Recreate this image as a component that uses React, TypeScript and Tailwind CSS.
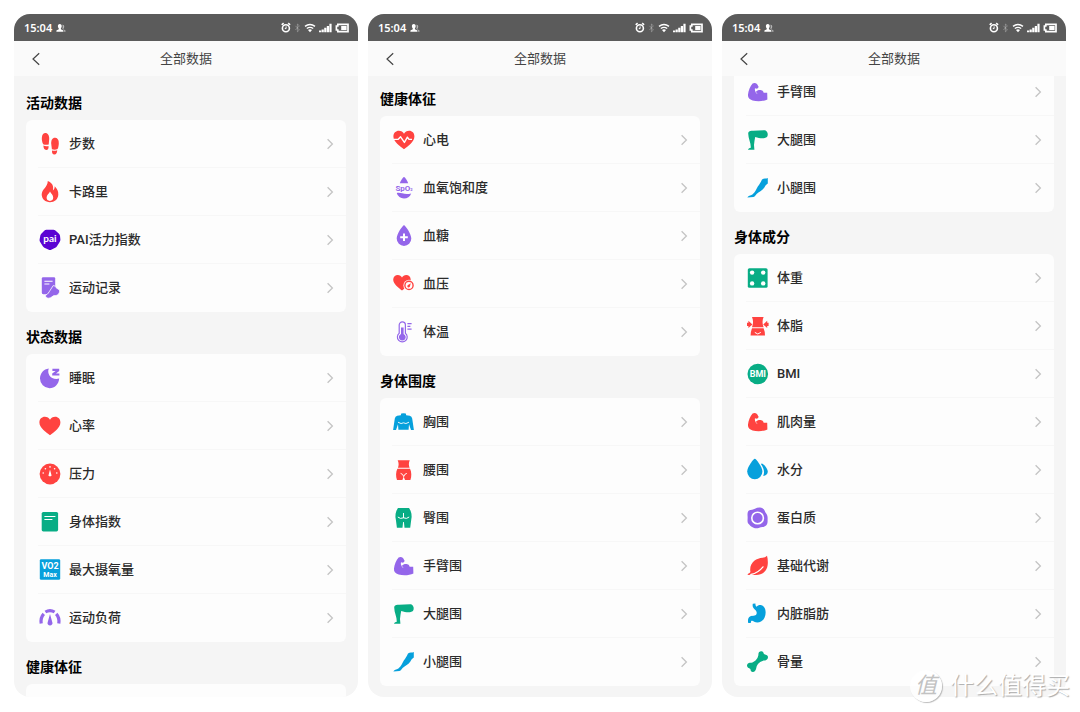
import type { ReactNode } from "react";

const RED = "#ff4340";
const PURPLE = "#9466ea";
const GREEN = "#08ad85";
const BLUE = "#06a0dc";

type Item = { label: string; icon: ReactNode };
type Group = { title?: string; items: Item[] };

function Icon({ color, children }: { color: string; children: ReactNode }) {
    return (
        <svg viewBox="0 0 22 22" fill={color} className="size-[22px] shrink-0 overflow-visible" aria-hidden="true">
            {children}
        </svg>
    );
}

const HEART = "M11 20.2 C7 17.2 .4 12.5 .4 7.4 C.4 4 2.9 1.8 5.8 1.8 C8.2 1.8 10 3 11 4.8 C12 3 13.8 1.8 16.2 1.8 C19.1 1.8 21.4 4 21.4 7.4 C21.4 12.5 15 17.2 11 20.2Z";
const DROP = "M11 0.2 C12.2 .2 18.3 8.6 18.3 13.6 A7.3 7.3 0 0 1 3.7 13.6 C3.7 8.6 9.8 .2 11 .2Z";

function Steps() {
    return (
        <Icon color={RED}>
            <path d="M6 0 C8.8 -.2 10.3 2.5 10.2 6 L9.7 11.4 C7.8 12.1 5.8 12 4.2 11.2 C2.2 7.5 2 .6 6 0Z" />
            <path d="M4.4 12.6 C6 13.3 7.8 13.4 9.5 12.9 C9.8 15.4 9 17 7.2 17 C5.4 17 4.4 15.2 4.4 12.6Z" />
            <path d="M16.2 4.7 C20.3 4.9 20.6 11 18.6 16 C16.8 16.8 14.8 16.9 12.9 16.2 L12.2 10.8 C12 7.2 13.3 4.6 16.2 4.7Z" />
            <path d="M13 17.4 C14.8 17.9 16.6 17.8 18.2 17.2 C18.2 19.8 17.2 21.5 15.4 21.5 C13.6 21.5 12.8 20 13 17.4Z" />
        </Icon>
    );
}

function Flame() {
    return (
        <Icon color={RED}>
            <path d="M8.8 0 C13.5 2 14.8 5.2 13.9 9.4 C15.3 8.5 15.8 7 15.7 5.3 C18.3 8 19.5 10.5 19.3 13.7 C19 18.3 15.4 21.2 11 21.2 C6.3 21.2 2.7 18.1 2.7 13.6 C2.7 8 8.6 6.6 8.8 0Z" />
            <path d="M11 10.6 C12 12.8 14.2 13.8 14.2 16.6 A3.3 3.3 0 0 1 7.6 16.6 C7.6 13.8 10.2 12.7 11 10.6Z" fill="#fff" />
        </Icon>
    );
}

function Pai() {
    return (
        <Icon color="#5b04d3">
            <path d="M7.4 .8 H14.4 Q15.6 .8 16.4 1.6 L20 4.8 Q20.8 5.6 21 6.8 L21.4 10.6 Q21.5 11.7 20.8 12.7 L17.8 17.4 Q17.2 18.3 16.2 18.7 L12.2 20.8 Q11 21.4 9.8 20.8 L5.4 18.7 Q4.4 18.3 3.8 17.3 L1 12.7 Q.4 11.7 .6 10.5 L1.4 6.3 Q1.6 5.2 2.5 4.4 L5.5 1.5 Q6.3 .8 7.4 .8Z" />
            <text x="11" y="13.2" textAnchor="middle" fill="#fff" fontSize="10" fontWeight="700" fontFamily="Lato, sans-serif">pai</text>
        </Icon>
    );
}

function Records() {
    return (
        <Icon color={PURPLE}>
            <path d="M4.2 .2 H15 Q16.2 .2 16.2 1.4 V9.4 L8 17.2 H4.2 Q2.8 17.2 2.8 15.8 V1.6 Q2.8 .2 4.2 .2Z" />
            <path d="M5.4 4.2 H13.6 M5.4 7 H10.4" stroke="#fff" strokeWidth="1.1" />
            <path d="M14.2 8.6 C16 8.2 16.6 10.6 17.8 11.2 L20.6 13 C21 16.4 18.6 18.8 15.6 18.6 C13.4 18.5 12.6 21.4 9.4 21.2 C7.6 21.1 6.6 20.2 6.4 18.4 C8.8 17.4 9.8 15.4 11.2 13.2 Z" stroke="#fff" strokeWidth=".8" />
        </Icon>
    );
}

function Sleep() {
    return (
        <Icon color={PURPLE}>
            <path d="M9.8 1.4 C7.6 6.6 11.8 13.4 20.2 11.6 C19.7 17.4 15.8 21.3 10.5 21.3 A9.8 9.8 0 0 1 1 11.5 C1 6.3 4.7 2 9.8 1.4Z" />
            <path d="M13.4 1.8 H20.2 V3.9 L17 6.4 H20.4 V8.5 H13.2 V6.5 L16.6 3.9 H13.4Z" />
        </Icon>
    );
}

function HeartRate() {
    return (
        <Icon color={RED}>
            <path d={HEART} />
        </Icon>
    );
}

function Pressure() {
    return (
        <Icon color={RED}>
            <circle cx="11" cy="11" r="10.4" />
            <g fill="#fff">
                <circle cx="11" cy="3.9" r=".8" />
                <circle cx="6.4" cy="5.7" r=".8" />
                <circle cx="15.6" cy="5.7" r=".8" />
                <circle cx="4.2" cy="10" r=".8" />
                <circle cx="17.8" cy="10" r=".8" />
                <path d="M11 6.4 L12.3 11.4 A1.4 1.4 0 1 1 9.7 11.4Z" />
            </g>
        </Icon>
    );
}

function BodyIndex() {
    return (
        <Icon color={GREEN}>
            <rect x="2.7" y="1" width="16.4" height="19.4" rx="1.6" />
            <path d="M5.4 5.5 H16.4 M5.4 8.5 H13.4" stroke="#fff" strokeWidth="1.2" />
        </Icon>
    );
}

function Vo2() {
    return (
        <Icon color={BLUE}>
            <rect x=".8" y=".2" width="20.4" height="20.6" rx="1.4" />
            <g fill="#fff" textAnchor="middle" fontWeight="700" fontFamily="Roboto, sans-serif">
                <text x="11" y="10" fontSize="9">VO2</text>
                <text x="11" y="18" fontSize="7">Max</text>
            </g>
        </Icon>
    );
}

function Load() {
    return (
        <Icon color={PURPLE}>
            <g fill="none" stroke={PURPLE} strokeWidth="3.2">
                <path d="M2.2 16.4 C1.6 12.4 2.6 9.2 4.8 6.8" />
                <path d="M6.4 5 C9.2 3.3 12.8 3.3 15.6 5" />
                <path d="M17.2 6.8 C19.4 9.2 20.4 12.4 19.8 16.4" />
            </g>
            <path d="M11 7 L13.4 15.4 A2.5 2.5 0 1 1 8.6 15.4Z" />
        </Icon>
    );
}

function Ecg() {
    return (
        <Icon color={RED}>
            <path d={HEART} />
            <path d="M.4 10.4 H5 L7.6 7.8 L11.4 13.4 L14.4 8.2 L16 10.4 H19" fill="none" stroke="#fff" strokeWidth="1.4" strokeLinejoin="round" />
        </Icon>
    );
}

function Spo2() {
    return (
        <Icon color={PURPLE}>
            <path d="M11 0 C12 0 14 3.2 15.2 6.2 H6.8 C8 3.2 10 0 11 0Z" />
            <path d="M3.8 16 C8 15 11 18.2 18.2 16.4 C17 19.6 14.3 21.4 11 21.4 C7.6 21.4 4.7 19.2 3.8 16Z" />
            <text x="11" y="13.6" textAnchor="middle" fontSize="8" fontWeight="700" fontFamily="Roboto, sans-serif">
                SpO<tspan fontSize="4">2</tspan>
            </text>
        </Icon>
    );
}

function Glucose() {
    return (
        <Icon color={PURPLE}>
            <path d={DROP} />
            <path d="M11 8.4 V16 M7.2 12.2 H14.8" stroke="#fff" strokeWidth="2" />
        </Icon>
    );
}

function BloodPressure() {
    return (
        <Icon color={RED}>
            <path d="M9 17.6 C5.6 15 .2 11 .2 6.8 C.2 3.8 2.3 2 4.8 2 C6.7 2 8.2 3 9 4.5 C9.8 3 11.4 2 13.2 2 C15.8 2 17.7 3.8 17.7 6.8 C17.7 11 12.4 15 9 17.6Z" />
            <circle cx="16" cy="12.4" r="5.6" fill="#fff" />
            <circle cx="16" cy="12.4" r="4.1" fill="none" stroke={RED} strokeWidth="1.4" />
            <path d="M17.8 10.2 L16.9 13.4 A1.3 1.3 0 1 1 15 12Z" />
        </Icon>
    );
}

function Thermometer() {
    return (
        <Icon color={PURPLE}>
            <path d="M6.2 12.2 V4 A3.1 3.1 0 0 1 12.4 4 V12.2 A4.9 4.9 0 1 1 6.2 12.2Z" fill="none" stroke={PURPLE} strokeWidth="1.2" />
            <path d="M8 6.4 H10.6 V13 A3.4 3.4 0 1 1 8 13Z" />
            <path d="M14.4 2.6 H18.6 M14.4 5.4 H17.4 M14.4 8.2 H18.6" stroke={PURPLE} strokeWidth="1.3" />
        </Icon>
    );
}

function Chest() {
    return (
        <Icon color={BLUE}>
            <path d="M8.2 2.6 Q10.5 1.7 12.8 2.6 L13.2 4.2 L16.8 4.8 Q18.8 5.4 19.2 7.6 L20.9 19 H18 L16 13.2 L15.6 18.8 H5.4 L5 13.2 L3 19 H.1 L1.8 7.6 Q2.2 5.4 4.2 4.8 L7.8 4.2Z" />
            <path d="M5 11.2 Q8.4 13.6 10.5 11.8 Q12.6 13.6 16 11.2" fill="none" stroke="#fff" strokeWidth=".9" />
        </Icon>
    );
}

function Waist() {
    return (
        <Icon color={RED}>
            <path d="M4.7 1.2 H16.7 C15.6 4 15.6 6.2 16.6 8.8 H4.9 C5.9 6.2 5.9 4 4.7 1.2Z" />
            <path d="M4.4 9.8 H17 C18.6 13 18.8 17.4 17.4 21 H12 L10.7 17.4 L9.4 21 H4 C2.6 17.4 2.8 13 4.4 9.8Z" />
            <path d="M7.6 14.4 Q10 14.8 10.7 17.6 Q11.4 14.8 13.8 14.4" fill="none" stroke="#fff" strokeWidth="1" />
        </Icon>
    );
}

function Hips() {
    return (
        <Icon color={GREEN}>
            <path d="M5 1 H16 C18.6 4.6 19.2 9 18.2 13 L17.2 20.8 H11.5 L10.9 15 H10.1 L9.5 20.8 H3.9 L2.9 13 C1.9 9 2.4 4.6 5 1Z" />
            <path d="M10.5 6 V11 M4.8 10 Q7.4 12.4 10.5 10.8 Q13.6 12.4 16.2 10" fill="none" stroke="#fff" strokeWidth="1" />
        </Icon>
    );
}

function Arm({ color }: { color: string }) {
    return (
        <Icon color={color}>
            <path d="M5.6 2.6 C6.8 1.6 8.6 1.6 10 3 L11.6 5.8 C11.4 7.3 10 8 8.8 7.6 L8 7.2 C7.6 9 8 10.2 8.8 11 C10.2 9.2 12.2 8.8 14.2 9.2 C15.8 9.5 16.5 10.6 16.6 11.7 H20.2 L20.4 18.4 C16.4 20.4 10 20.6 5.6 19.4 C2.2 18.5 .7 16.8 1 13.6 C1.4 9.4 3.2 5.4 5.6 2.6Z" />
            <path d="M8.6 11.2 C9.2 11.8 9.7 12.2 10.2 12.4" stroke="#fff" strokeWidth=".7" fill="none" />
        </Icon>
    );
}

function Thigh() {
    return (
        <Icon color={GREEN}>
            <path d="M1.2 4.6 C1.2 2.6 2.6 1.8 4.6 1.8 C9 2 14 1.2 18.6 1.4 C20.8 2.8 21.4 5.8 20 8 C17.2 10 12.8 9.4 8.2 8 C7.8 10.4 7.2 13 7 16 L7.4 20.8 H1 C1.2 19.8 2.4 19.2 3.8 18.8 C4 14 1.2 9.6 1.2 4.6Z" />
        </Icon>
    );
}

function Calf() {
    return (
        <Icon color={BLUE}>
            <path d="M15 2.4 C17 1.2 19 2 20.8 1 V6.4 C18.8 7.6 18.4 8.8 17.4 10.4 C15.6 13.2 12 14.8 9.6 17 C8.2 18.4 8.4 19.2 6.4 20 L.4 20.4 C.8 18.8 3.6 18.6 5.4 17.4 C8.6 15 9.2 12.2 10.8 9.6 C12.4 7 13.8 5.4 15 2.4Z" />
        </Icon>
    );
}

function Weight() {
    return (
        <Icon color={GREEN}>
            <rect x=".8" y="1.2" width="19.8" height="19.6" rx="1.6" />
            <g fill="#fff">
                <circle cx="5.1" cy="5.6" r="2.2" />
                <circle cx="16.2" cy="5.6" r="2.2" />
                <circle cx="5.1" cy="16.4" r="2.2" />
                <circle cx="16.2" cy="16.4" r="2.2" />
            </g>
        </Icon>
    );
}

function BodyFat() {
    return (
        <Icon color={RED}>
            <path d="M5 2 H16.6 C15.2 5.4 15.2 8.6 16.6 12.2 H5 C6.4 8.6 6.4 5.4 5 2Z" />
            <path d="M5 13.2 H16.6 Q18 16.6 18 20.4 H3.6 Q3.6 16.6 5 13.2Z" />
            <path d="M7.8 17.4 L10.8 19 L13.8 17.4" fill="none" stroke="#fff" strokeWidth="1" />
            <path d="M0 7.8 H1.4 V5.8 L5.4 9.4 L1.4 13 V11 H0Z" />
            <path d="M21.6 7.8 H20.2 V5.8 L16.2 9.4 L20.2 13 V11 H21.6Z" />
        </Icon>
    );
}

function Bmi() {
    return (
        <Icon color={GREEN}>
            <circle cx="10.8" cy="11" r="10.3" />
            <text x="10.8" y="14.2" textAnchor="middle" fill="#fff" fontSize="9" fontWeight="700" fontFamily="Roboto, sans-serif">BMI</text>
        </Icon>
    );
}

function Water() {
    return (
        <Icon color={BLUE}>
            <path d="M7.8 -.2 C9 -.2 15.4 8 15.4 12.6 A7.6 7.6 0 0 1 .2 12.6 C.2 8 6.6 -.2 7.8 -.2Z" />
            <path d="M14.6 4.4 C16.4 4.4 20.8 9.6 20.8 12.6 C20.8 15.2 19 16.8 16.2 16.9 C18 13 16.6 9 14 5.2Z" />
        </Icon>
    );
}

function Protein() {
    return (
        <Icon color={PURPLE}>
            <path d="M3.4 3 C7 2.8 9.4 .2 13 .5 C17.4 .8 17.6 4.4 19.2 6.6 C21 9.4 20.6 10.8 20.6 13.4 C20.8 18 18.4 19.6 15.4 20 C12.4 20.4 10 22.2 6.6 20.8 C3.6 19.6 2.6 18 1.2 16.6 C0 15.2 .8 12 .6 9.6 C.4 7 .2 3.2 3.4 3Z" />
            <circle cx="10.6" cy="11" r="5.8" fill="none" stroke="#fff" strokeWidth="1.6" />
        </Icon>
    );
}

function Leaf() {
    return (
        <Icon color={RED}>
            <path d="M20 .8 C21.2 5 21.2 10.6 19.6 13.8 C17.8 18 13.4 20.2 8.6 20 C6.8 20 5.6 19.2 4.2 19.2 C3 19.2 2 20.6 .4 19.6 C1.4 18 2.8 18.2 3.4 17 C1.8 7.4 9.6 3.2 15.4 2.8 C17.4 2.6 18.8 2 20 .8Z" />
            <path d="M4 19.4 C9.4 18.4 13 15.6 16 11.8" fill="none" stroke="#fff" strokeWidth="1.2" strokeLinecap="round" />
        </Icon>
    );
}

function Stomach() {
    return (
        <Icon color={BLUE}>
            <path d="M5.8 .8 L8.4 .6 C8.4 2.4 8.8 3.2 9.6 3.8 C11.2 1.6 14.6 1.4 16.6 3.6 C19 6 19.2 10.8 17.6 14.4 C15.6 19 10.8 20.8 7.2 18.8 C5.2 17.4 3.8 17.4 3.8 20 H1.2 C.6 16.8 1.2 14.2 3.4 13.2 C5.6 12.4 8.2 13.2 9.4 11.2 C10.2 9.4 9.4 7.8 7.8 6.4 C6 5 5.2 3.2 5.8 .8Z" />
        </Icon>
    );
}

function Bone() {
    return (
        <Icon color={GREEN}>
            <path d="M11.4 4 C11.2 1.2 12.6 .2 14.4 .3 C15.8 .5 16.6 1.4 16.8 2.8 C18.4 4.2 20.8 3.6 21 6 C21.1 8.4 18.8 9.4 16.8 9.6 C13.4 10.4 10.2 13 9.4 16.4 C9 19 7.8 21 5.8 21 C4 21 3.6 19.6 3.4 18 C1.8 17 -.1 16.8 0 14.4 C.2 12.2 2 11.8 4.2 11.8 C7.8 11 10.6 8.2 11.4 4Z" />
        </Icon>
    );
}

const activity: Group = {
    title: "活动数据",
    items: [
        { label: "步数", icon: <Steps /> },
        { label: "卡路里", icon: <Flame /> },
        { label: "PAI活力指数", icon: <Pai /> },
        { label: "运动记录", icon: <Records /> },
    ],
};

const status: Group = {
    title: "状态数据",
    items: [
        { label: "睡眠", icon: <Sleep /> },
        { label: "心率", icon: <HeartRate /> },
        { label: "压力", icon: <Pressure /> },
        { label: "身体指数", icon: <BodyIndex /> },
        { label: "最大摄氧量", icon: <Vo2 /> },
        { label: "运动负荷", icon: <Load /> },
    ],
};

const vitals: Group = {
    title: "健康体征",
    items: [
        { label: "心电", icon: <Ecg /> },
        { label: "血氧饱和度", icon: <Spo2 /> },
        { label: "血糖", icon: <Glucose /> },
        { label: "血压", icon: <BloodPressure /> },
        { label: "体温", icon: <Thermometer /> },
    ],
};

const limbs: Item[] = [
    { label: "手臂围", icon: <Arm color={PURPLE} /> },
    { label: "大腿围", icon: <Thigh /> },
    { label: "小腿围", icon: <Calf /> },
];

const girth: Group = {
    title: "身体围度",
    items: [
        { label: "胸围", icon: <Chest /> },
        { label: "腰围", icon: <Waist /> },
        { label: "臀围", icon: <Hips /> },
        ...limbs,
    ],
};

const composition: Group = {
    title: "身体成分",
    items: [
        { label: "体重", icon: <Weight /> },
        { label: "体脂", icon: <BodyFat /> },
        { label: "BMI", icon: <Bmi /> },
        { label: "肌肉量", icon: <Arm color={RED} /> },
        { label: "水分", icon: <Water /> },
        { label: "蛋白质", icon: <Protein /> },
        { label: "基础代谢", icon: <Leaf /> },
        { label: "内脏脂肪", icon: <Stomach /> },
        { label: "骨量", icon: <Bone /> },
    ],
};

function StatusBar() {
    return (
        <div className="flex h-[27px] shrink-0 items-center justify-between bg-[#5b5b5b] pr-[9px] pl-2.5 text-white">
            <div className="flex items-center gap-1">
                <span className="font-['Noto_Sans',sans-serif] text-[11px] leading-none font-semibold">15:04</span>
                <svg viewBox="0 0 10 10" className="size-2.5" fill="currentColor" aria-hidden="true">
                    <path d="M3.8 1 C5.2 1 5.8 2 5.7 3.3 C5.6 4.4 5.2 5 4.9 5.4 V6.2 L7.4 7.4 V8.8 H.4 V7.4 L2.8 6.2 V5.4 C2.3 5 2 4.4 1.9 3.3 C1.8 2 2.4 1 3.8 1Z" />
                    <path opacity=".55" d="M6.3 1.8 C7.8 1.6 8.4 2.6 8.2 4 C8.1 4.8 7.7 5.2 7.5 5.6 V6.3 L9.5 7.4 V8.8 H8.1 V7 L6.3 6 C6.8 4.8 6.9 3 6.3 1.8Z" />
                </svg>
            </div>
            <svg viewBox="0 0 68 12" className="h-3 w-[68px]" fill="none" stroke="currentColor" aria-hidden="true">
                <circle cx="4.9" cy="6.2" r="3.5" strokeWidth="1.6" />
                <path d="M.7 2.8 L2.6 1.2 M9.1 2.8 L7.2 1.2" strokeWidth="1.6" />
                <path d="M5.1 4.4 V6.6 H3.8" strokeWidth="1" />
                <path opacity=".3" d="M14.4 3.8 L18.4 8 L16.4 9.8 V2 L18.4 3.8 L14.4 8" strokeWidth=".9" />
                <path d="M24 4.4 Q29 .6 34 4.4 M25.8 6.5 Q29 4.2 32.2 6.5" strokeWidth="1.4" />
                <path d="M27 8 Q29 6.7 31 8 L29 10.2Z" fill="currentColor" stroke="none" />
                <path d="M38 10.2 H40.2 V8.4 H38Z M40.6 10.2 H42.8 V7.4 H40.6Z M43.2 10.2 H45.4 V5.8 H43.2Z M45.8 10.2 H48 V4 H45.8Z M48.4 10.2 H50.6 V1.8 H48.4Z" fill="currentColor" stroke="none" />
                <path d="M56.8 2.4 H67 V9.6 H56.8 V8 H55.4 V4 H56.8Z" strokeWidth="1.7" />
                <path d="M60.2 4 H65.6 V8 H60.2Z" fill="currentColor" stroke="none" />
            </svg>
        </div>
    );
}

function Section({ title, items }: Group) {
    return (
        <section>
            {title && <h2 className="flex h-[42px] items-center pt-2 text-sm font-bold text-black">{title}</h2>}
            <ul className="min-h-12 overflow-hidden rounded-md bg-[#fdfdfd]">
                {items.map((item) => (
                    <li key={item.label} className="group">
                        <a href="#" className="relative flex h-12 items-center pr-3 pl-[13px]">
                            {item.icon}
                            <span className="ml-2 flex-1 text-[13px] font-medium text-[#2b2b2b]">{item.label}</span>
                            <svg viewBox="0 0 8 12" className="h-3 w-2" fill="none" stroke="#c4c4c4" strokeWidth="1.3" aria-hidden="true">
                                <path d="M1.6 1.2 L6.4 6 L1.6 10.8" />
                            </svg>
                            <span className="absolute right-0 bottom-0 left-3 h-px bg-[#f7f7f7] group-last:hidden" />
                        </a>
                    </li>
                ))}
            </ul>
        </section>
    );
}

function Phone({ offset, groups }: { offset: string; groups: Group[] }) {
    return (
        <article className="flex min-h-0 flex-col overflow-hidden rounded-2xl bg-[#f5f5f5]">
            <StatusBar />
            <header className="grid h-[35px] shrink-0 grid-cols-[44px_1fr_44px] items-center bg-[#fafafa]">
                <button type="button" aria-label="返回" className="flex h-full items-center justify-center">
                    <svg viewBox="0 0 8 14" className="h-3.5 w-2" fill="none" stroke="#444" strokeWidth="1.2" aria-hidden="true">
                        <path d="M7.2 1.2 L1 7 L7.2 12.8" />
                    </svg>
                </button>
                <h1 className="text-center text-[13px] text-[#444]">全部数据</h1>
            </header>
            <div className="min-h-0 flex-1 overflow-hidden px-3">
                <div className={offset}>
                    {groups.map((group, i) => (
                        <Section key={i} {...group} />
                    ))}
                </div>
            </div>
        </article>
    );
}

function Watermark() {
    return (
        <div className="absolute right-2.5 bottom-2.5 flex items-center gap-2 text-white" aria-hidden="true">
            <span className="flex size-8 items-center justify-center rounded-full bg-white/80 text-[22px] leading-none text-[#c2c2c2] italic shadow-[1px_1px_1px_#bbb]">
                值
            </span>
            <span className="text-2xl leading-8 [text-shadow:1px_1px_1px_#aaa]">什么值得买</span>
        </div>
    );
}

export default function App() {
    return (
        <div className="relative h-screen bg-white font-[Roboto,'Noto_Sans_CJK_SC',sans-serif]">
            <main className="grid h-full grid-cols-3 grid-rows-1 gap-2.5 px-3.5 pt-3.5 pb-[15px]">
                <Phone offset="pt-0.5" groups={[activity, status, { title: vitals.title, items: [] }]} />
                <Phone offset="-mt-0.5" groups={[vitals, girth]} />
                <Phone offset="-mt-2" groups={[{ items: limbs }, composition]} />
            </main>
            <Watermark />
        </div>
    );
}
